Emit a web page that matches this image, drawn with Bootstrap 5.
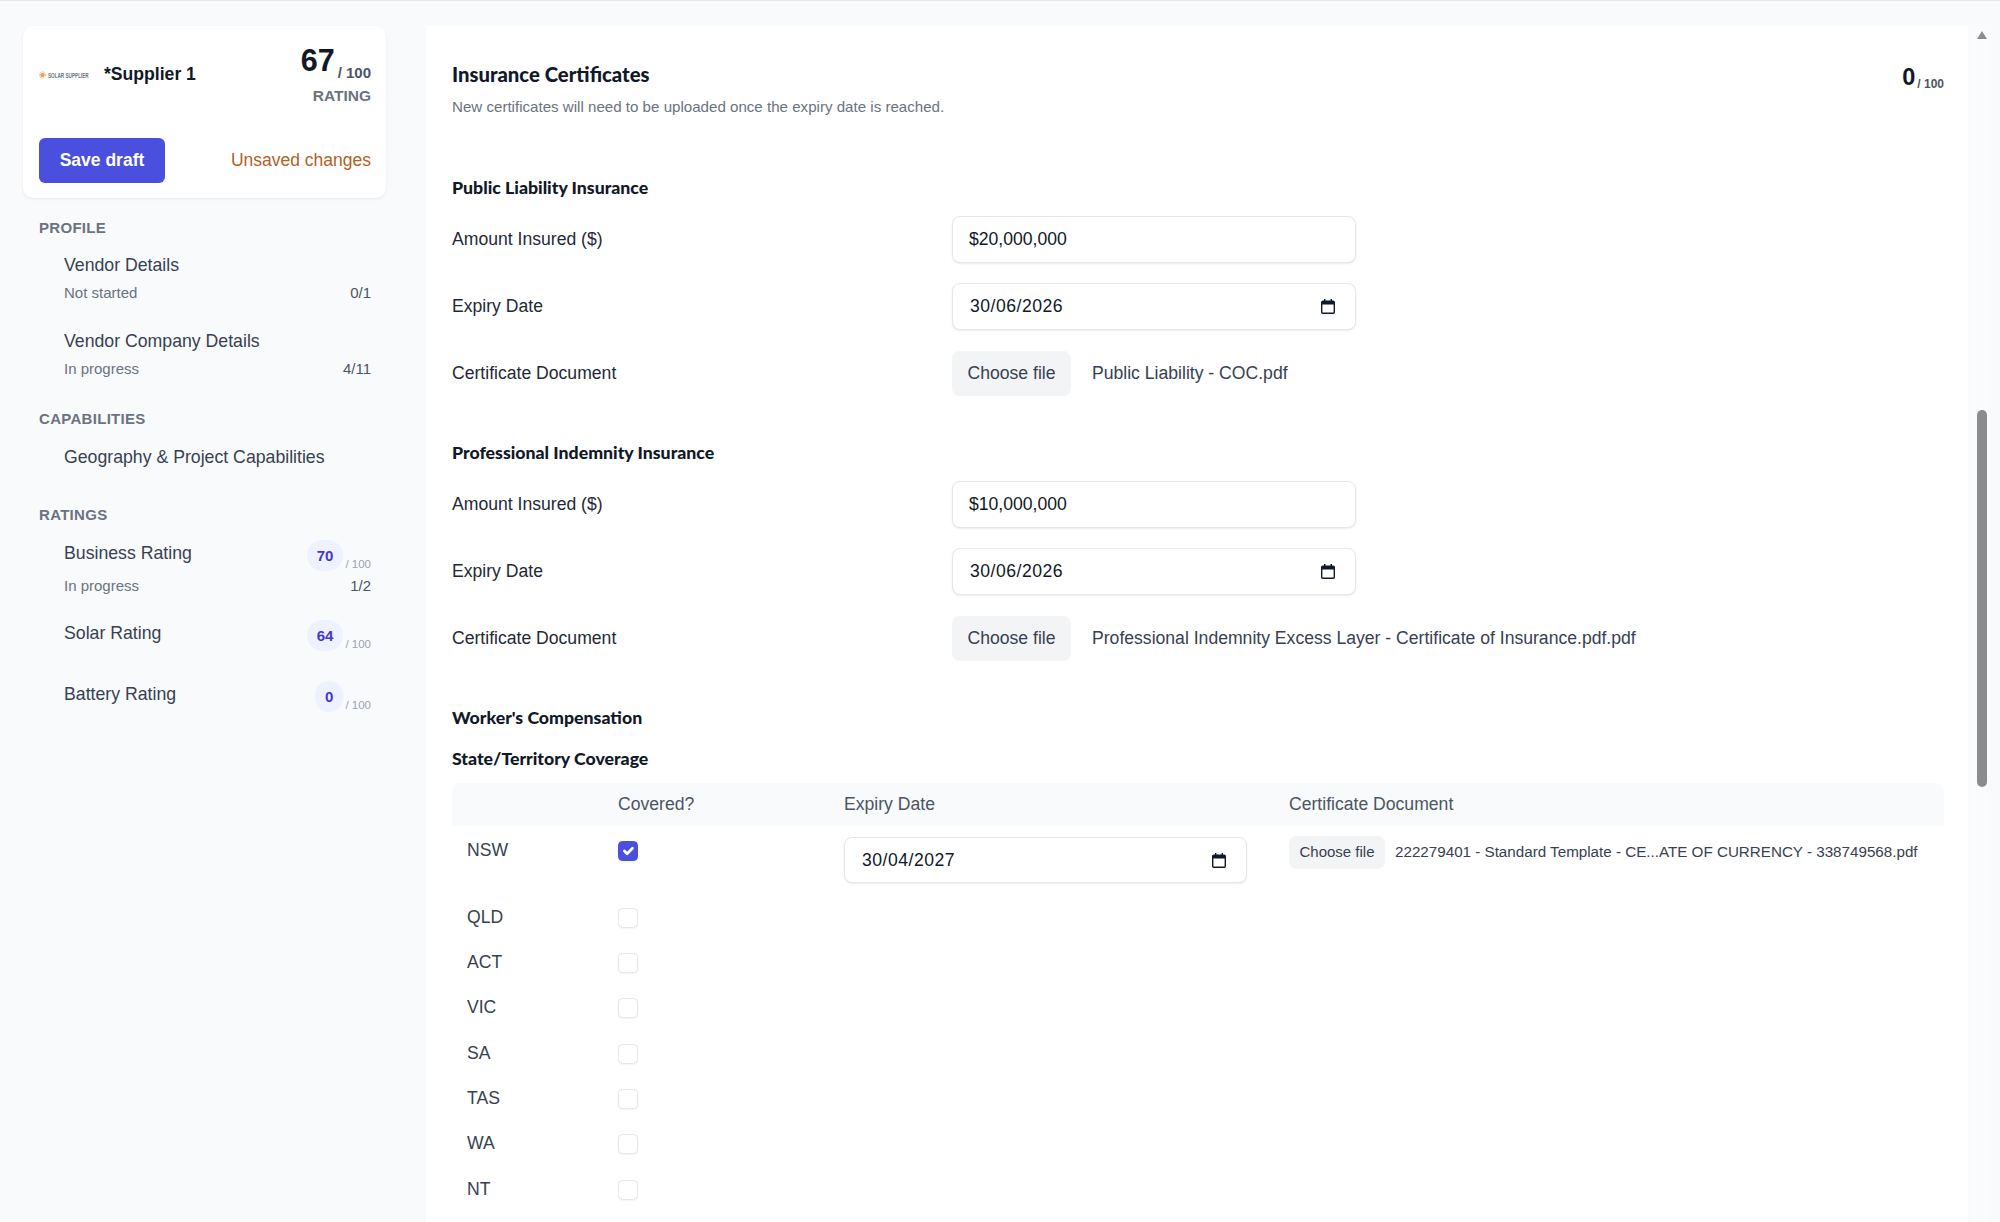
<!DOCTYPE html>
<html lang="en">
<head>
  <meta charset="UTF-8">
  <meta name="viewport" content="width=device-width, initial-scale=1">
  <title>Insurance Certificates</title>
  <link href="https://cdn.jsdelivr.net/npm/bootstrap@5.3.3/dist/css/bootstrap.min.css" rel="stylesheet">
  <style>
    html, body {
      height: 100%;
      overflow: hidden;
    }
    body {
      background-color: #f9fafc;
      border-top: 1px solid #e5e7eb;
      font-family: "Liberation Sans", Arial, sans-serif;
      color: #1f2937;
    }
    .page-wrap {
      height: 1221px;
      padding-top: 25px;
    }
    .side-col {
      width: 426px;
      flex: none;
      padding-left: 23px;
      padding-right: 40px;
    }
    .supplier-box {
      height: 172px;
      padding: 16px 15px 15px 16px;
      border-radius: 10px;
      background: #fff;
      box-shadow: 0 1px 3px rgba(0, 0, 0, .07);
    }
    .supplier-name {
      font-size: 17.6px;
      font-weight: 700;
      color: #111827;
      margin-top: -2px;
    }
    .logo-text {
      font-size: 7.5px;
      font-weight: 700;
      fill: #6b7280;
    }
    .score-big {
      font-size: 30.5px;
      font-weight: 700;
      color: #111827;
      line-height: 36px;
    }
    .score-of {
      font-size: 15px;
      font-weight: 700;
      color: #4b5563;
      line-height: 17px;
      margin-bottom: -3px;
    }
    .score-label {
      font-size: 15.5px;
      font-weight: 700;
      color: #6b7280;
      margin-top: 7px;
    }
    .btn-save {
      width: 126px;
      height: 45px;
      background: #4a4fdd;
      color: #fff;
      font-weight: 700;
      font-size: 17.5px;
      border-radius: 6px;
      border: 0;
    }
    .unsaved {
      font-size: 17.5px;
      color: #b45f24;
    }
    .nav-head {
      font-size: 15px;
      font-weight: 700;
      color: #6b7280;
      padding-left: 16px;
      letter-spacing: .3px;
      line-height: 20px;
    }
    .nav-entry {
      padding: 0 15px 0 41px;
      font-size: 17.7px;
      color: #374151;
      line-height: 24px;
    }
    .nav-label {
      padding-top: 1px;
    }
    .nav-sub {
      font-size: 15px;
      color: #6b7280;
      line-height: 20px;
      margin-top: 6px;
    }
    .nav-count {
      color: #4b5563;
    }
    .score-pill {
      min-width: 28px;
      height: 31px;
      padding: 0 10px;
      border-radius: 16px;
      background: #eef2ff;
      color: #4338ca;
      font-weight: 700;
      font-size: 15px;
      line-height: 32px;
      text-align: center;
    }
    .pill-of {
      font-size: 11.5px;
      color: #9ca3af;
      margin-left: 2px;
      position: relative;
      top: 11.5px;
    }
    .main-panel {
      width: 1542px;
      flex: none;
      background: #fff;
      padding: 0 24px 0 26px;
      overflow: hidden;
    }
    .font-head {
      font-family: Lato, "Liberation Sans", sans-serif;
      font-weight: 900;
      color: #111827;
    }
    .title-main {
      font-size: 20.3px;
      margin: 0;
      line-height: 24px;
    }
    .title-sub {
      font-size: 15.12px;
      color: #6b7280;
      line-height: 20px;
      margin-top: 11px;
    }
    .title-score {
      font-size: 23.5px;
      font-weight: 700;
      color: #111827;
      line-height: 28px;
      margin-top: 1px;
    }
    .title-of {
      font-size: 12px;
      font-weight: 700;
      color: #4b5563;
      line-height: 14px;
    }
    .sect-title {
      font-size: 17.7px;
      line-height: 22px;
      margin: 0;
    }
    .field-row {
      font-size: 17.6px;
      color: #1f2937;
    }
    .field-label {
      width: 500px;
      flex: none;
    }
    .field-input {
      width: 404px;
      height: 47px;
      padding: 0 16px;
      font-size: 17.6px;
      color: #111827;
      border: 1px solid #e5e7eb;
      border-radius: 8px;
      box-shadow: 0 1px 2px rgba(0, 0, 0, .08);
    }
    .date-box {
      padding: 0 20px 0 17px;
    }
    .date-input {
      border: 0;
      outline: 0;
      background: transparent;
      flex-grow: 1;
      min-width: 0;
      padding: 0;
      color: #111827;
      letter-spacing: .5px;
    }
    .file-btn {
      height: 45px;
      width: 119px;
      padding: 0;
      background: #f3f4f6;
      border: 0;
      border-radius: 8px;
      font-size: 17.6px;
      color: #374151;
    }
    .file-name {
      margin-left: 21px;
      font-size: 17.6px;
      color: #374151;
    }
    .cover-table {
      width: 100%;
      table-layout: fixed;
      font-size: 17.6px;
      color: #374151;
      margin: 0;
    }
    .cover-table th {
      height: 43px;
      background: #f9fafb;
      font-weight: 400;
      color: #4b5563;
      padding: 0;
    }
    .cover-table th:first-child {
      border-radius: 8px 0 0 0;
    }
    .cover-table th:last-child {
      border-radius: 0 8px 0 0;
    }
    .cover-table td {
      padding: 0;
      height: 45.4px;
      vertical-align: middle;
    }
    .cover-table .state-cell {
      padding-left: 15px;
    }
    .cover-table .row-tall td {
      height: 68px;
      vertical-align: top;
      padding-top: 11px;
    }
    .cover-table .row-tall .file-cell {
      padding-top: 10px;
    }
    .cover-check {
      width: 20px;
      height: 20px;
      margin: 4px 0 0;
      border: 1px solid #e5e7eb;
      border-radius: 5px;
      box-shadow: 0 1px 2px rgba(0, 0, 0, .05);
    }
    .cover-check:checked {
      background-color: #4a4fdd;
      border-color: #4a4fdd;
    }
    .table-date {
      width: 403px;
      height: 46px;
    }
    .table-file-btn {
      width: 96px;
      height: 33px;
      font-size: 15px;
    }
    .table-file-name {
      margin-left: 10px;
      font-size: 15.2px;
      color: #374151;
      white-space: nowrap;
    }
    .scroll-track {
      margin-left: 6px;
      width: 16px;
      flex: none;
      background: #fafbfd;
    }
    .scroll-arrow {
      width: 0;
      height: 0;
      margin: 5px auto 0;
      border-left: 5px solid transparent;
      border-right: 5px solid transparent;
      border-bottom: 8px solid #8c8c8c;
    }
    .scroll-thumb {
      width: 10px;
      height: 377px;
      margin: 371px auto 0;
      border-radius: 5px;
      background: #8c8c8c;
    }
  </style>
</head>

<body>
  <svg width="0" height="0" class="d-block">
    <symbol id="cal" viewBox="0 0 14 15">
      <path fill="#111827" d="M3 0h1.4v1.5h5.200V0H11v1.500h1.200A1.800 1.800 0 0 1 14 3.300v9.900A1.800 1.800 0 0 1 12.200 15H1.800A1.800 1.800 0 0 1 0 13.200V3.300A1.800 1.800 0 0 1 1.800 1.500H3zM1.400 5.500v7.700c0 .2.200.4.400.4h10.400c.2 0 .4-.2.400-.4V5.500z"/>
    </symbol>
  </svg>

  <div class="page-wrap d-flex">

    <!-- Sidebar -->
    <div class="side-col">
      <div class="supplier-box d-flex flex-column justify-content-between">
        <div class="d-flex justify-content-between align-items-start">
          <div class="d-flex align-items-center" style="margin-top:21px">
            <svg width="65" height="12" viewBox="0 0 65 12">
              <circle cx="3.500" cy="6" r="2.300" fill="#e9a45c"/>
              <circle cx="3.500" cy="6" r="3.200" fill="none" stroke="#e9a45c" stroke-width=".9" stroke-dasharray="1 .7"/>
              <text class="logo-text" transform="translate(9 8.800) scale(.62 1)">SOLAR SUPPLIER</text>
            </svg>
            <span class="supplier-name">*Supplier 1</span>
          </div>
          <div class="text-end">
            <div class="d-flex justify-content-end align-items-end" style="gap:3px"><span class="score-big">67</span><span class="score-of">/ 100</span></div>
            <div class="score-label" style="margin-top:6px">RATING</div>
          </div>
        </div>
        <div class="d-flex justify-content-between align-items-center">
          <button class="btn btn-save p-0" type="button">Save draft</button>
          <span class="unsaved">Unsaved changes</span>
        </div>
      </div>

      <div class="nav-head" style="margin-top:20px">PROFILE</div>
      <div class="nav-entry" style="margin-top:15px">
        Vendor Details
        <div class="nav-sub d-flex justify-content-between"><span>Not started</span><span class="nav-count">0/1</span></div>
      </div>
      <div class="nav-entry" style="margin-top:26px">
        Vendor Company Details
        <div class="nav-sub d-flex justify-content-between"><span>In progress</span><span class="nav-count">4/11</span></div>
      </div>

      <div class="nav-head" style="margin-top:30px">CAPABILITIES</div>
      <div class="nav-entry" style="margin-top:16px">Geography &amp; Project Capabilities</div>

      <div class="nav-head" style="margin-top:36px">RATINGS</div>
      <div class="nav-entry" style="margin-top:15px">
        <div class="d-flex justify-content-between align-items-start">
          <span class="nav-label">Business Rating</span>
          <span class="d-flex"><span class="score-pill">70</span><span class="pill-of">/ 100</span></span>
        </div>
        <div class="nav-sub d-flex justify-content-between" style="margin-top:5px"><span>In progress</span><span class="nav-count">1/2</span></div>
      </div>
      <div class="nav-entry d-flex justify-content-between align-items-start" style="margin-top:24px">
        <span class="nav-label">Solar Rating</span>
        <span class="d-flex"><span class="score-pill">64</span><span class="pill-of">/ 100</span></span>
      </div>
      <div class="nav-entry d-flex justify-content-between align-items-start" style="margin-top:30px">
        <span class="nav-label">Battery Rating</span>
        <span class="d-flex"><span class="score-pill">0</span><span class="pill-of">/ 100</span></span>
      </div>
    </div>

    <!-- Main form -->
    <div class="main-panel">
      <div class="d-flex justify-content-between align-items-start" style="padding-top:36px">
        <div>
          <h5 class="font-head title-main">Insurance Certificates</h5>
          <div class="title-sub">New certificates will need to be uploaded once the expiry date is reached.</div>
        </div>
        <div class="d-flex align-items-end title-score" style="gap:2px"><span>0</span><span class="title-of">/ 100</span></div>
      </div>

      <h6 class="font-head sect-title" style="margin-top:60px">Public Liability Insurance</h6>
      <div class="field-row d-flex align-items-center" style="margin-top:17px">
        <label class="field-label">Amount Insured ($)</label>
        <input class="form-control field-input" type="text" value="$20,000,000">
      </div>
      <div class="field-row d-flex align-items-center" style="margin-top:20px">
        <label class="field-label">Expiry Date</label>
        <div class="form-control field-input date-box d-flex align-items-center">
          <input class="date-input" type="text" value="30/06/2026">
          <svg width="14" height="15"><use href="#cal"/></svg>
        </div>
      </div>
      <div class="field-row d-flex align-items-center" style="margin-top:21px">
        <label class="field-label">Certificate Document</label>
        <button class="file-btn" type="button">Choose file</button>
        <span class="file-name">Public Liability - COC.pdf</span>
      </div>

      <h6 class="font-head sect-title" style="margin-top:46px">Professional Indemnity Insurance</h6>
      <div class="field-row d-flex align-items-center" style="margin-top:17px">
        <label class="field-label">Amount Insured ($)</label>
        <input class="form-control field-input" type="text" value="$10,000,000">
      </div>
      <div class="field-row d-flex align-items-center" style="margin-top:20px">
        <label class="field-label">Expiry Date</label>
        <div class="form-control field-input date-box d-flex align-items-center">
          <input class="date-input" type="text" value="30/06/2026">
          <svg width="14" height="15"><use href="#cal"/></svg>
        </div>
      </div>
      <div class="field-row d-flex align-items-center" style="margin-top:21px">
        <label class="field-label">Certificate Document</label>
        <button class="file-btn" type="button">Choose file</button>
        <span class="file-name">Professional Indemnity Excess Layer - Certificate of Insurance.pdf.pdf</span>
      </div>

      <h6 class="font-head sect-title" style="margin-top:46px">Worker's Compensation</h6>
      <h6 class="font-head sect-title" style="margin-top:19px">State/Territory Coverage</h6>

      <table class="cover-table" style="margin-top:13px">
        <colgroup><col style="width:166px"><col style="width:226px"><col style="width:445px"><col></colgroup>
        <thead>
          <tr><th></th><th>Covered?</th><th>Expiry Date</th><th>Certificate Document</th></tr>
        </thead>
        <tbody>
          <tr class="row-tall">
            <td class="state-cell">NSW</td>
            <td><input class="form-check-input cover-check" type="checkbox" checked></td>
            <td class="date-cell">
              <div class="form-control field-input date-box table-date d-flex align-items-center">
                <input class="date-input" type="text" value="30/04/2027">
                <svg width="14" height="15"><use href="#cal"/></svg>
              </div>
            </td>
            <td class="file-cell"><div class="d-flex align-items-center"><button class="file-btn table-file-btn" type="button">Choose file</button><span class="table-file-name">222279401 - Standard Template - CE...ATE OF CURRENCY - 338749568.pdf</span></div></td>
          </tr>
          <tr><td class="state-cell">QLD</td><td><input class="form-check-input cover-check" type="checkbox"></td><td></td><td></td></tr>
          <tr><td class="state-cell">ACT</td><td><input class="form-check-input cover-check" type="checkbox"></td><td></td><td></td></tr>
          <tr><td class="state-cell">VIC</td><td><input class="form-check-input cover-check" type="checkbox"></td><td></td><td></td></tr>
          <tr><td class="state-cell">SA</td><td><input class="form-check-input cover-check" type="checkbox"></td><td></td><td></td></tr>
          <tr><td class="state-cell">TAS</td><td><input class="form-check-input cover-check" type="checkbox"></td><td></td><td></td></tr>
          <tr><td class="state-cell">WA</td><td><input class="form-check-input cover-check" type="checkbox"></td><td></td><td></td></tr>
          <tr><td class="state-cell">NT</td><td><input class="form-check-input cover-check" type="checkbox"></td><td></td><td></td></tr>
        </tbody>
      </table>
    </div>

    <!-- Scrollbar -->
    <div class="scroll-track">
      <div class="scroll-arrow"></div>
      <div class="scroll-thumb"></div>
    </div>
  </div>
</body>
</html>
